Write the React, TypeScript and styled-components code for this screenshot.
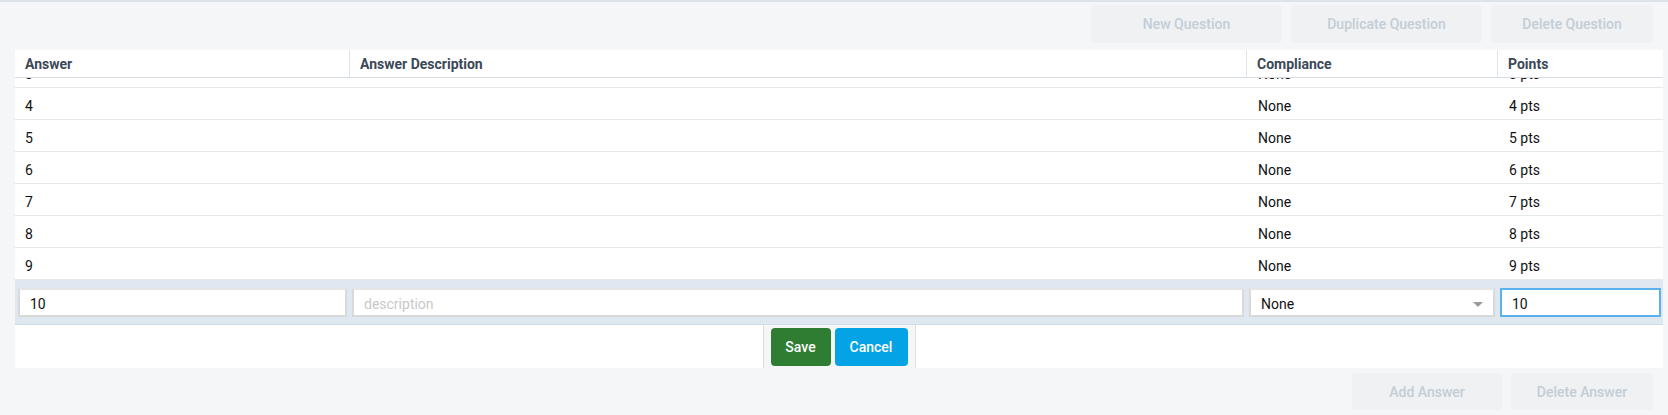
import React from "react";
import styled, { createGlobalStyle } from "styled-components";

const GlobalStyle = createGlobalStyle`
  html, body {
    margin: 0;
    padding: 0;
    background: #f5f6f8;
    font-family: Roboto, "Liberation Sans", Arial, sans-serif;
  }
`;

const COLS = "334px 897px 251px 1fr";

const Page = styled.div`
  height: 415px;
  box-sizing: border-box;
  border-top: 2px solid #dde3e9;
  background: #f5f6f8;
  display: flex;
  flex-direction: column;
  padding: 0 5px 0 15px;
  & > * {
    flex-shrink: 0;
  }
`;

const Toolbar = styled.div<{ $top?: boolean }>`
  display: flex;
  justify-content: flex-end;
  gap: 9px;
  padding-right: 10px;
  height: ${(p) => (p.$top ? "48px" : "47px")};
  padding-top: ${(p) => (p.$top ? "3px" : "5px")};
  box-sizing: border-box;
`;

const GhostButton = styled.button<{ $w: number; $h: number }>`
  width: ${(p) => p.$w}px;
  height: ${(p) => p.$h}px;
  border: none;
  border-radius: 4px;
  background: #eff1f3;
  color: #c5cdd5;
  font-family: Roboto, "Liberation Sans", Arial, sans-serif;
  font-size: 14px;
  font-weight: 500;
  cursor: default;
`;

const Table = styled.div`
  background: #fff;
  display: flex;
  flex-direction: column;
`;

const HeaderRow = styled.div`
  display: grid;
  grid-template-columns: ${COLS};
  height: 28px;
  border-bottom: 1px solid #d6dee4;
  box-sizing: border-box;
`;

const HeaderCell = styled.div<{ $first?: boolean }>`
  display: flex;
  align-items: center;
  padding-left: ${(p) => (p.$first ? "10px" : "10px")};
  border-left: ${(p) => (p.$first ? "none" : "1px solid #dfe4e8")};
  font-size: 14px;
  font-weight: 700;
  color: #3b4857;
`;

/* scrolled list: the top row sits partly under the header */
const Body = styled.div`
  height: 202px;
  overflow: hidden;
`;

const RowList = styled.div`
  margin-top: -22px;
`;

const Row = styled.div`
  display: grid;
  grid-template-columns: ${COLS};
  height: 32px;
  border-bottom: 1px solid #e4e9ed;
  box-sizing: border-box;
`;

const Cell = styled.div<{ $first?: boolean }>`
  display: flex;
  align-items: center;
  padding-top: 5px;
  padding-left: ${(p) => (p.$first ? "10px" : "12px")};
  font-size: 14px;
  color: #111;
`;

const EditRow = styled.div`
  display: grid;
  grid-template-columns: ${COLS};
  background: #dfe8f0;
  padding: 8px 0 7px;
  border-bottom: 1px solid #d3dde6;
`;

const EditCell = styled.div`
  padding: 0 2px 0 3px;
  position: relative;
`;

const Field = styled.input<{ $focus?: boolean }>`
  width: 100%;
  height: 29px;
  box-sizing: border-box;
  border: 2px solid ${(p) => (p.$focus ? "#5ab1ec" : "#d9d9d9")};
  border-top-color: ${(p) => (p.$focus ? "#5ab1ec" : "#e6e6e6")};
  background: #fff;
  padding: 3px 10px 0;
  font-family: Roboto, "Liberation Sans", Arial, sans-serif;
  font-size: 14px;
  color: #111;
  outline: none;
  &::placeholder {
    color: #c9c9c9;
  }
`;

const SelectBox = styled.div`
  height: 29px;
  box-sizing: border-box;
  border: 2px solid #d9d9d9;
  border-top-color: #e6e6e6;
  background: #fff;
  display: flex;
  align-items: center;
  padding: 3px 10px 0;
  font-size: 14px;
  color: #111;
`;

const Caret = styled.span`
  position: absolute;
  right: 14px;
  top: 14px;
  width: 0;
  height: 0;
  border-left: 5px solid transparent;
  border-right: 5px solid transparent;
  border-top: 5px solid #9a9a9a;
`;

const Footer = styled.div`
  height: 43px;
  display: flex;
  justify-content: center;
`;

const ActionGroup = styled.div`
  display: flex;
  gap: 4px;
  padding: 3px 7px 2px 7px;
  background: #f5f6f8;
  border-left: 1px solid #dcdfe2;
  border-right: 1px solid #dcdfe2;
`;

const ActionButton = styled.button<{ $bg: string; $w: number }>`
  width: ${(p) => p.$w}px;
  height: 38px;
  border: none;
  border-radius: 4px;
  background: ${(p) => p.$bg};
  color: #fff;
  font-family: Roboto, "Liberation Sans", Arial, sans-serif;
  font-size: 14px;
  font-weight: 500;
`;

const rows = [3, 4, 5, 6, 7, 8, 9];

export default function App() {
  return (
    <>
      <GlobalStyle />
      <Page>
        <Toolbar $top>
          <GhostButton $w={191} $h={38}>New Question</GhostButton>
          <GhostButton $w={191} $h={38}>Duplicate Question</GhostButton>
          <GhostButton $w={162} $h={38}>Delete Question</GhostButton>
        </Toolbar>
        <Table>
          <HeaderRow>
            <HeaderCell $first>Answer</HeaderCell>
            <HeaderCell>Answer Description</HeaderCell>
            <HeaderCell>Compliance</HeaderCell>
            <HeaderCell>Points</HeaderCell>
          </HeaderRow>
          <Body>
            <RowList>
              {rows.map((n) => (
                <Row key={n}>
                  <Cell $first>{n}</Cell>
                  <Cell />
                  <Cell>None</Cell>
                  <Cell>{n} pts</Cell>
                </Row>
              ))}
            </RowList>
          </Body>
          <EditRow>
            <EditCell>
              <Field defaultValue="10" />
            </EditCell>
            <EditCell>
              <Field placeholder="description" />
            </EditCell>
            <EditCell>
              <SelectBox>None</SelectBox>
              <Caret />
            </EditCell>
            <EditCell>
              <Field $focus defaultValue="10" />
            </EditCell>
          </EditRow>
          <Footer>
            <ActionGroup>
              <ActionButton $bg="#2e7d32" $w={60}>Save</ActionButton>
              <ActionButton $bg="#03a3e6" $w={73}>Cancel</ActionButton>
            </ActionGroup>
          </Footer>
        </Table>
        <Toolbar>
          <GhostButton $w={150} $h={37}>Add Answer</GhostButton>
          <GhostButton $w={142} $h={37}>Delete Answer</GhostButton>
        </Toolbar>
      </Page>
    </>
  );
}
